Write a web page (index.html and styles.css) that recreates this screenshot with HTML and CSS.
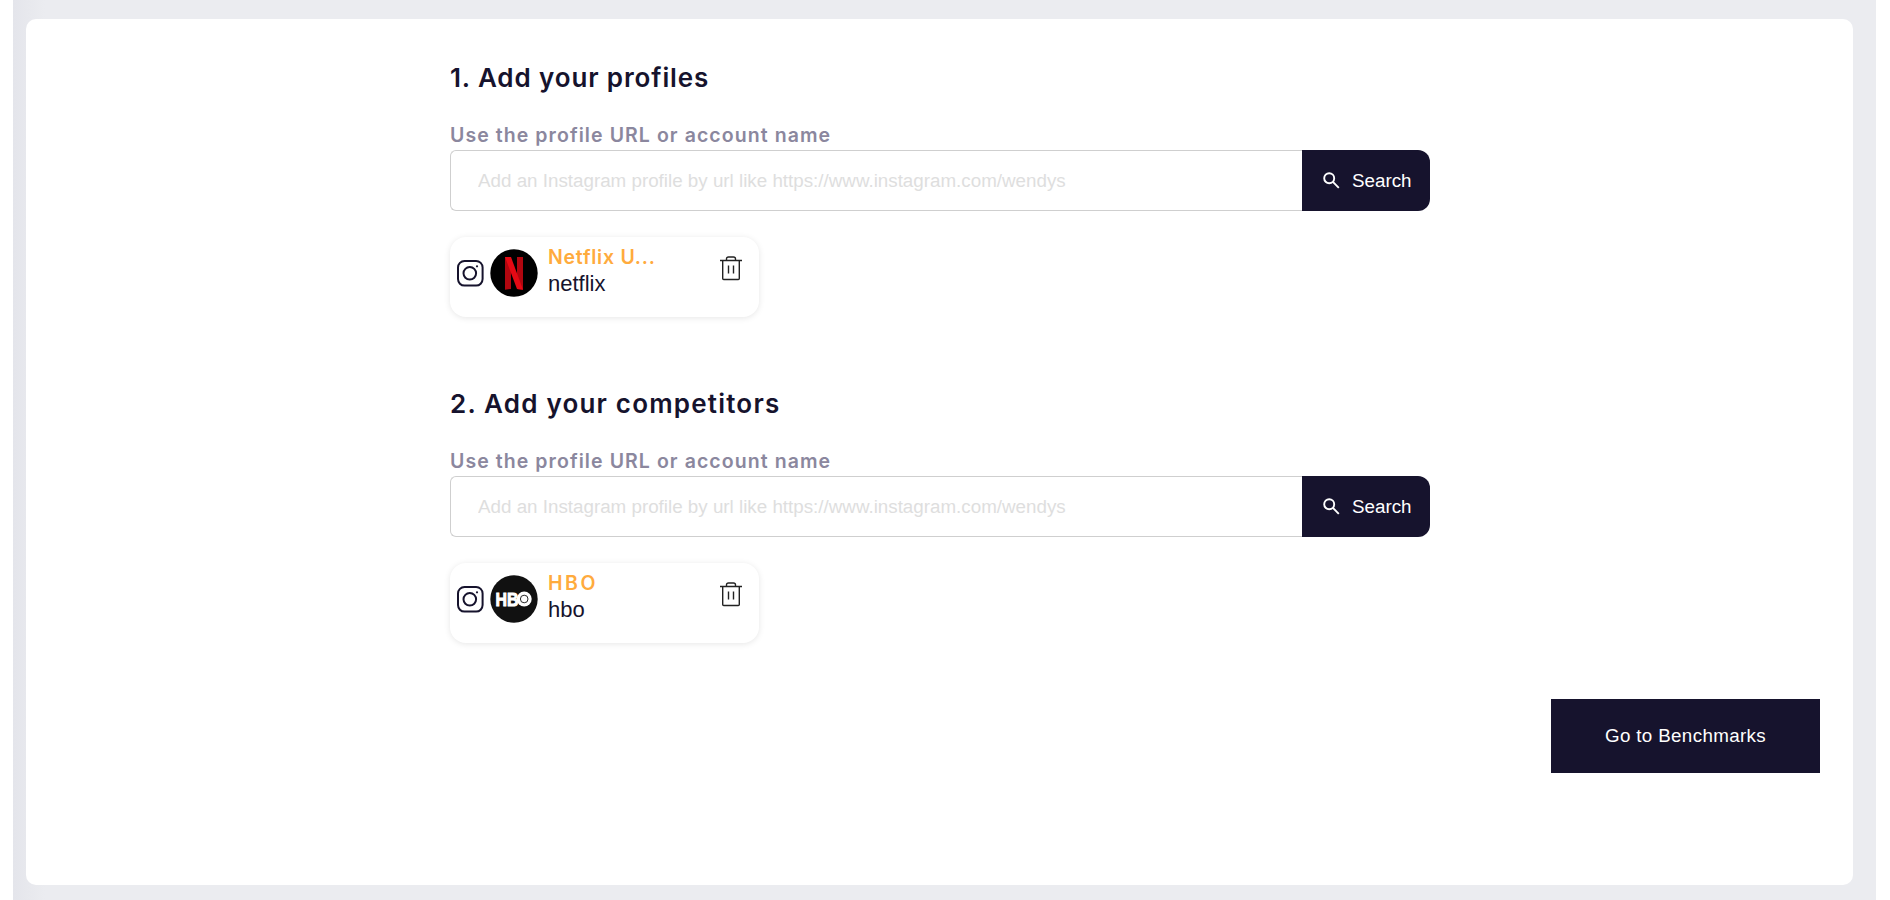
FILE: index.html
```html
<!DOCTYPE html>
<html lang="en">
<head>
    <meta charset="UTF-8">
    <meta name="viewport" content="width=device-width, initial-scale=1.0">
    <title>Benchmarks</title>
    <link rel="stylesheet" href="styles.css">
</head>
<body>
    <div class="page">
        <main class="panel">
            <section class="section">
                <h2>1. Add your profiles</h2>
                <label for="profile">Use the profile URL or account name</label>
                <form class="search">
                    <input type="text" id="profile" placeholder="Add an Instagram profile by url like https://www.instagram.com/wendys">
                    <button type="button" class="search-btn">
                        <svg width="17" height="17" viewBox="0 0 17 17" fill="none" stroke="#fff" stroke-width="1.9"><circle cx="6.2" cy="6.2" r="5"/><path d="M9.9 9.9l5.9 5.9"/></svg>
                        <span>Search</span>
                    </button>
                </form>
                <div class="card">
                    <svg class="instagram" width="27" height="27" viewBox="0 0 27 27" fill="none" stroke="#16132d" stroke-width="2"><rect x="1" y="1" width="24.6" height="24.6" rx="6.5"/><circle cx="12.8" cy="13.3" r="6.3"/><circle cx="20" cy="6.3" r="1.1" fill="#16132d" stroke="none"/></svg>
                    <svg class="avatar" width="48" height="48" viewBox="0 0 48 48">
                        <circle cx="24" cy="24" r="23.7" fill="#000"/>
                        <path fill="#b1060f" d="M15 8h6v32l-6 .7zM27 8h6v32.700l-6-.7z"/>
                        <path fill="#e50914" d="M15 8h6l12 32.700-6-.7z"/>
                    </svg>
                    <div class="names">
                        <div class="name">Netflix U...</div>
                        <div class="account">netflix</div>
                    </div>
                    <svg class="trash" width="22" height="25" viewBox="0 0 22 25" fill="none" stroke="#222" stroke-width="1.4"><path d="M0 4.500h22M2.700 4.500V22.500q0 1 1 1h14.600q1 0 1-1V4.500M6.500 4.500V3q0-2 2-2h5q2 0 2 2v1.500M8.500 9.500v8M13.500 9.500v8"/></svg>
                </div>
            </section>

            <section class="section">
                <h2 class="wide">2. Add your competitors</h2>
                <label for="competitor">Use the profile URL or account name</label>
                <form class="search">
                    <input type="text" id="competitor" placeholder="Add an Instagram profile by url like https://www.instagram.com/wendys">
                    <button type="button" class="search-btn">
                        <svg width="17" height="17" viewBox="0 0 17 17" fill="none" stroke="#fff" stroke-width="1.9"><circle cx="6.2" cy="6.2" r="5"/><path d="M9.9 9.9l5.9 5.9"/></svg>
                        <span>Search</span>
                    </button>
                </form>
                <div class="card">
                    <svg class="instagram" width="27" height="27" viewBox="0 0 27 27" fill="none" stroke="#16132d" stroke-width="2"><rect x="1" y="1" width="24.6" height="24.6" rx="6.5"/><circle cx="12.8" cy="13.3" r="6.3"/><circle cx="20" cy="6.3" r="1.1" fill="#16132d" stroke="none"/></svg>
                    <svg class="avatar" width="48" height="48" viewBox="0 0 48 48">
                        <circle cx="24" cy="24" r="23.7" fill="#111"/>
                        <text class="logo-text" x="5.500" y="31" textLength="23" lengthAdjust="spacingAndGlyphs">HB</text>
                        <circle cx="34.200" cy="24" r="7.500" fill="#fff"/>
                        <circle cx="34.200" cy="24" r="3.800" fill="none" stroke="#111" stroke-width="0.9"/>
                    </svg>
                    <div class="names">
                        <div class="name wide">HBO</div>
                        <div class="account">hbo</div>
                    </div>
                    <svg class="trash" width="22" height="25" viewBox="0 0 22 25" fill="none" stroke="#222" stroke-width="1.4"><path d="M0 4.500h22M2.700 4.500V22.500q0 1 1 1h14.600q1 0 1-1V4.500M6.500 4.500V3q0-2 2-2h5q2 0 2 2v1.500M8.500 9.500v8M13.500 9.500v8"/></svg>
                </div>
            </section>

            <div class="actions">
                <button type="button" class="go-btn">Go to Benchmarks</button>
            </div>
        </main>
    </div>
</body>
</html>
```
FILE: styles.css
```css
* {
    box-sizing: border-box;
}

body {
    margin: 0;
    background: #fff;
    font-family: "Liberation Sans", Arial, sans-serif;
}

.page {
    height: 900px;
    margin: 0 14px 0 13px;
    padding: 19px 23px 15px 13px;
    background: linear-gradient(to right, #e4e5eb, #ebecf0 32px);
}

.panel {
    height: 866px;
    padding: 41px 33px 0 0;
    background: #fff;
    border-radius: 10px;
}

.section {
    width: 980px;
    height: 326px;
    margin-left: 424px;
}

h2 {
    margin: 0;
    font: 600 26px/36px Inter, sans-serif;
    letter-spacing: 0.880px;
    color: #16132d;
}

h2.wide {
    letter-spacing: 1.200px;
}

label {
    display: block;
    margin-top: 26px;
    font: 600 19.500px/26px Inter, sans-serif;
    letter-spacing: 1.070px;
    color: #8b879e;
}

.search {
    display: flex;
    height: 61px;
    margin-top: 2px;
}

.search input {
    width: 852px;
    padding: 0 27px;
    border: 1px solid #cfcfcf;
    border-right: none;
    border-radius: 6px 0 0 6px;
    font: 18.800px "Liberation Sans", Arial, sans-serif;
}

.search input::placeholder {
    color: #dedede;
}

.search-btn {
    display: flex;
    align-items: center;
    gap: 12px;
    width: 128px;
    padding: 0 0 0 21px;
    border: none;
    border-radius: 0 12px 12px 0;
    background: #16132d;
    color: #fff;
    font: 18.800px "Liberation Sans", Arial, sans-serif;
}

.card {
    display: flex;
    width: 309px;
    height: 80px;
    margin-top: 26px;
    padding: 0 17px 0 7px;
    border-radius: 16px;
    box-shadow: 0 1px 6px rgba(0, 0, 0, 0.1);
}

.instagram {
    margin-top: 23px;
}

.avatar {
    margin: 12px 0 0 6px;
}

.names {
    flex: 1;
    margin: 7px 0 0 10px;
}

.name {
    font: 600 19.500px/27px Inter, sans-serif;
    letter-spacing: 0.750px;
    color: #ffab3d;
}

.name.wide {
    letter-spacing: 2.500px;
}

.account {
    font-size: 22px;
    line-height: 26px;
    color: #16132d;
}

.trash {
    margin-top: 19px;
}

.logo-text {
    font: bold 19px "Liberation Sans", Arial, sans-serif;
    fill: #fff;
    stroke: #fff;
    stroke-width: 1px;
}

.actions {
    display: flex;
    justify-content: flex-end;
    margin-top: -13px;
}

.go-btn {
    width: 269px;
    height: 74px;
    padding: 0;
    border: none;
    background: #16132d;
    color: #fff;
    font: 18.800px "Liberation Sans", Arial, sans-serif;
    letter-spacing: 0.350px;
}
```
